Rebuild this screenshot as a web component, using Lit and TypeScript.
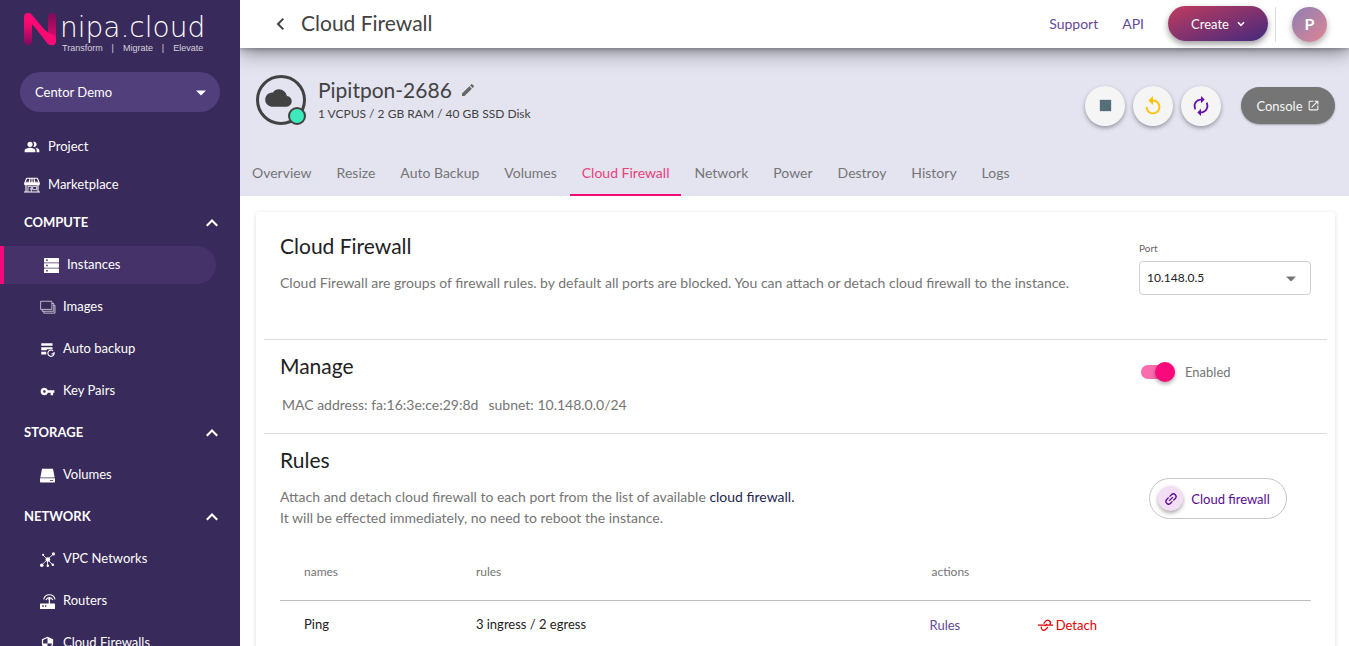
import { LitElement, html, svg, css, nothing, type SVGTemplateResult } from "lit";
import { customElement, property, state } from "lit/decorators.js";
import { classMap } from "lit/directives/class-map.js";

const icons: Record<string, SVGTemplateResult> = {
  project: svg`<path fill="currentColor" d="M16.67 13.13C18.04 14.06 19 15.32 19 17v3h4v-3c0-2.18-3.57-3.47-6.33-3.87zM15 12c2.21 0 4-1.79 4-4s-1.79-4-4-4c-.47 0-.91.1-1.33.24a5.98 5.98 0 0 1 0 7.52c.42.14.86.24 1.33.24zM9 12c2.21 0 4-1.79 4-4s-1.79-4-4-4-4 1.79-4 4 1.79 4 4 4zm0 1c-2.67 0-8 1.34-8 4v3h16v-3c0-2.66-5.33-4-8-4z"/>`,
  market: svg`<path fill="none" stroke="currentColor" stroke-width="1.6" d="M4 2h16M4 2 1 9v2h22V9l-3-7M3 11v11M21 11v11M0 22.5h24M9 2 7.5 11M15 2l1.500 9M12 2v9M1 8h22"/><path fill="none" stroke="currentColor" stroke-width="1.300" d="M6 22v-8h5v8M13 14h6v5h-6zM9.500 17v2"/><path fill="currentColor" d="M1 9h22v3.500H1z"/>`,
  instances: svg`<path fill="currentColor" fill-rule="evenodd" d="M1 0h22a1 1 0 0 1 1 1v5.500a.8.8 0 0 1-1 .8H1a.8.8 0 0 1-1-.8V1a1 1 0 0 1 1-1zm2.500 2.500v2.200H6V2.500zM1 8.500h22a1 1 0 0 1 1 1v5a1 1 0 0 1-1 1H1a1 1 0 0 1-1-1v-5a1 1 0 0 1 1-1zm2.500 2.400v2.200H6v-2.200zM1 16.700h22a1 1 0 0 1 1 1V23a1 1 0 0 1-1 1H1a1 1 0 0 1-1-1v-5.300a1 1 0 0 1 1-1zm2.500 2.600v2.200H6v-2.200z"/>`,
  images: svg`<path fill="none" stroke="currentColor" stroke-width="1.400" opacity=".75" d="M1 2h18v13H1zM3.500 15v3H22V5.500h-3M6 18v3h18V8.500h-2"/>`,
  backup: svg`<path fill="currentColor" d="M2 2h18v4H2zM2 8.500h18v3H11.500L10 13H2zM2 15.500h8v4.500H2z"/><path fill="none" stroke="currentColor" stroke-width="1.800" d="M21 14.200a5 5 0 1 0 1.500 4.800h-4M22.500 19v-3"/>`,
  key: svg`<path fill="currentColor" d="M12.650 10A5.990 5.990 0 0 0 7 6c-3.310 0-6 2.690-6 6s2.690 6 6 6a5.990 5.990 0 0 0 5.650-4H17v4h4v-4h2v-4H12.650zM7 14c-1.100 0-2-.9-2-2s.9-2 2-2 2 .9 2 2-.9 2-2 2z"/>`,
  volumes: svg`<path fill="currentColor" fill-rule="evenodd" d="M5 1h14a2 2 0 0 1 2 1.500L23.500 15H.5L3 2.500A2 2 0 0 1 5 1zM0 16.500h24V22a1 1 0 0 1-1 1H1a1 1 0 0 1-1-1zm16 2.500v1.500h5V19z"/>`,
  vpc: svg`<path stroke="currentColor" stroke-width="1.300" d="m12 12 10-9.500M12 12 2.500 21M12 12l8.500 8.500M12 12 5 5M12 12v10"/><g fill="currentColor"><circle cx="12.500" cy="12" r="3.700"/><circle cx="21.500" cy="3" r="2.500"/><circle cx="2.800" cy="21" r="2.800"/><circle cx="12.500" cy="22" r="2"/><circle cx="20.500" cy="20.500" r="2"/><circle cx="5" cy="4.500" r="1.700"/></g>`,
  routers: svg`<path fill="currentColor" fill-rule="evenodd" d="M1 15h22a1 1 0 0 1 1 1v7a1 1 0 0 1-1 1H1a1 1 0 0 1-1-1v-7a1 1 0 0 1 1-1zm2.500 3v2.500H6V18zm4.500 0v2.500h2V18zM14 7h2v8h-2z"/><path fill="none" stroke="currentColor" stroke-width="1.800" d="M6 8.500a9.200 9.200 0 0 1 18 0M9.500 9.500a6 6 0 0 1 11 0"/><circle cx="15" cy="8" r="1.800" fill="currentColor"/>`,
  firewall: svg`<path fill="currentColor" d="M12 1 3 5v6c0 5.550 3.840 10.740 9 12 5.160-1.260 9-6.450 9-12V5l-9-4zm0 10.990h7c-.53 4.120-3.280 7.790-7 8.940V12H5V6.300l7-3.110v8.800z"/>`,
  up: svg`<path fill="currentColor" d="M12 6 3 15l2.300 2.300L12 10.600l6.700 6.700L21 15z"/>`,
  down: svg`<path fill="none" stroke="currentColor" stroke-width="4.500" d="m3 7 9 9 9-9"/>`,
  back: svg`<path fill="none" stroke="currentColor" stroke-width="3" d="m17 4-8 8 8 8"/>`,
  caret: svg`<path fill="currentColor" d="m0 6 12 12L24 6z"/>`,
  pencil: svg`<path fill="currentColor" d="M3 17.250V21h3.750L17.810 9.940l-3.750-3.750L3 17.250zM20.710 7.040a1 1 0 0 0 0-1.410l-2.340-2.340a1 1 0 0 0-1.410 0l-1.830 1.830 3.750 3.750 1.830-1.830z"/>`,
  cloud: svg`<path fill="currentColor" d="M19.350 10.040A7.490 7.490 0 0 0 12 4a6.500 6.500 0 0 0-5.500 3A5.500 5.500 0 0 0 5 20h14a5 5 0 0 0 .35-9.960z"/>`,
  stop: svg`<path fill="currentColor" d="M4 4h16v16H4z"/>`,
  replay: svg`<path fill="currentColor" d="M12 5V1L7 6l5 5V7c3.310 0 6 2.690 6 6s-2.690 6-6 6-6-2.690-6-6H4c0 4.420 3.580 8 8 8s8-3.580 8-8-3.580-8-8-8z"/>`,
  loop: svg`<path fill="currentColor" d="M12 6v3l4-4-4-4v3c-4.420 0-8 3.580-8 8 0 1.570.46 3.030 1.240 4.260L6.700 14.800A5.870 5.870 0 0 1 6 12c0-3.310 2.690-6 6-6zm6.760 1.740L17.300 9.200c.44.840.7 1.790.7 2.800 0 3.310-2.690 6-6 6v-3l-4 4 4 4v-3c4.420 0 8-3.580 8-8 0-1.570-.46-3.030-1.240-4.260z"/>`,
  open: svg`<path fill="currentColor" d="M19 19H5V5h7V3H5a2 2 0 0 0-2 2v14a2 2 0 0 0 2 2h14c1.100 0 2-.9 2-2v-7h-2v7zM14 3v2h3.590l-9.830 9.830 1.410 1.410L19 6.410V10h2V3h-7z"/>`,
  link: svg`<g transform="rotate(-45 12 12)"><path fill="currentColor" d="M3.900 12c0-1.710 1.390-3.100 3.100-3.100h4V7H7a5 5 0 0 0 0 10h4v-1.900H7c-1.710 0-3.100-1.390-3.100-3.100zM8 13h8v-2H8v2zm9-6h-4v1.900h4a3.100 3.100 0 0 1 0 6.200h-4V17h4a5 5 0 0 0 0-10z"/></g>`,
  unlink: svg`<path fill="none" stroke="currentColor" stroke-width="2" d="M0 11.500h24M9 9l3-3.500a4.200 4.200 0 0 1 7 5M16 14.500l-4 4a4.200 4.200 0 0 1-6.500-5M11 13l3.500-3.500"/>`,
};

@customElement("ui-icon")
export class UiIcon extends LitElement {
  @property() name = "";
  static styles = css`
    :host { display: inline-flex; flex: none; width: 16px; height: 16px; }
    .glyph { display: block; width: 100%; height: 100%; overflow: visible; }
  `;
  render() {
    return html`<svg class="glyph" viewBox="0 0 24 24" aria-hidden="true">${icons[this.name] ?? nothing}</svg>`;
  }
}

const groups = [
  { title: "COMPUTE", items: [["instances", "Instances"], ["images", "Images"], ["backup", "Auto backup"], ["key", "Key Pairs"]] },
  { title: "STORAGE", items: [["volumes", "Volumes"]] },
  { title: "NETWORK", items: [["vpc", "VPC Networks"], ["routers", "Routers"], ["firewall", "Cloud Firewalls"]] },
];

@customElement("side-nav")
export class SideNav extends LitElement {
  static styles = css`
    :host { display: block; box-sizing: border-box; height: 100vh; overflow: hidden; background: #382a5a; color: #fff; font-size: 13px; line-height: 20px; }
    .brand { display: flex; align-items: flex-start; gap: 4px; padding: 12px 24px 0; height: 60px; box-sizing: border-box; color: #fff; text-decoration: none; }
    .mark { flex: none; width: 32px; height: 34px; }
    .words { display: flex; flex-direction: column; }
    .name { font: 200 28px/31px "DejaVu Sans", sans-serif; }
    .motto { font: 9px/10px "Liberation Sans", sans-serif; color: #d6d2df; display: flex; justify-content: space-between; padding: 0 2px; }
    .project { position: relative; display: block; margin: 12px 20px 16px; }
    .project select { appearance: none; width: 100%; height: 40px; padding: 0 15px; border: 0; border-radius: 20px; background: #503f7b; color: #fff; font: inherit; }
    .project ui-icon { position: absolute; right: 14px; top: 16px; width: 10px; height: 10px; pointer-events: none; }
    .row { display: flex; align-items: center; box-sizing: border-box; height: 38px; padding: 0 16px 0 24px; gap: 8px; color: #fff; text-decoration: none; }
    .label { padding-bottom: 3px; }
    .group { display: flex; flex-direction: column; gap: 4px; margin-bottom: 4px; }
    .head { width: 100%; border: 0; background: none; font: inherit; font-weight: 700; justify-content: space-between; padding-right: 20px; }
    .sub { padding-left: 40px; margin-right: 24px; }
    .sub ui-icon { width: 15px; height: 15px; }
    .active { border-left: 4px solid #f50a79; border-radius: 0 19px 19px 0; background: #443269; }
  `;
  render() {
    return html`
      <a class="brand" href="#">
        <svg class="mark" viewBox="0 0 32 34" aria-hidden="true">
          <defs>
            <linearGradient id="l" x2="0" y2="1"><stop stop-color="#ff0a76" /><stop offset=".4" stop-color="#f0086f" /><stop offset="1" stop-color="#7d0c5c" /></linearGradient>
            <linearGradient id="r" x2="0" y2="1"><stop stop-color="#7d0c58" /><stop offset="1" stop-color="#f50a72" /></linearGradient>
          </defs>
          <rect y="1" width="8" height="32" rx="4" fill="url(#l)" />
          <rect x="24" y="1" width="8" height="32" rx="4" fill="url(#r)" />
          <path d="M4 1c2 0 3.500 1 5 3l10 12c3 3.500 6 5 9 6l4 3v4c0 5-6 5.500-9 2L13 18C10 14 7 11 4 9 0 7 0 1 4 1z" fill="#fa0a72" />
        </svg>
        <span class="words">
          <span class="name">nipa.cloud</span>
          <span class="motto"><span>Transform</span><span>|</span><span>Migrate</span><span>|</span><span>Elevate</span></span>
        </span>
      </a>
      <label class="project">
        <select aria-label="Project"><option>Centor Demo</option></select>
        <ui-icon name="caret"></ui-icon>
      </label>
      <nav>
        <a class="row" href="#"><ui-icon name="project"></ui-icon><span class="label">Project</span></a>
        <a class="row" href="#"><ui-icon name="market"></ui-icon><span class="label">Marketplace</span></a>
        ${groups.map((g) => html`
          <div class="group">
            <button class="row head"><span class="label">${g.title}</span><ui-icon name="up"></ui-icon></button>
            ${g.items.map(([icon, label]) => html`
              <a class=${classMap({ row: true, sub: true, active: label === "Instances" })} href="#">
                <ui-icon name=${icon}></ui-icon><span class="label">${label}</span>
              </a>`)}
          </div>`)}
      </nav>
    `;
  }
}

const tabs = ["Overview", "Resize", "Auto Backup", "Volumes", "Cloud Firewall", "Network", "Power", "Destroy", "History", "Logs"];

@customElement("app-root")
export class AppRoot extends LitElement {
  @state() private enabled = true;
  static styles = css`
    :host { display: grid; grid-template-columns: 240px minmax(0, 1fr); height: 100vh; overflow: hidden; font-family: Lato, sans-serif; font-size: 14px; line-height: 20px; color: #212121; background: #fff; }
    button { font: inherit; cursor: pointer; }
    a { text-decoration: none; }
    .page { height: 100vh; overflow: hidden; }
    .top { position: relative; z-index: 1; display: flex; align-items: center; box-sizing: border-box; height: 48px; padding: 0 22px 0 32px; background: #fff; box-shadow: 0 3px 20px rgba(0,0,0,.5), 0 1px 5px rgba(0,0,0,.25); }
    .back { display: flex; padding: 0; border: 0; background: none; color: #424242; }
    .title { flex: 1; margin: 0 0 0 13px; padding-bottom: 2px; font-size: 21px; line-height: 28px; font-weight: 400; color: #424242; }
    .toplink { margin-right: 24px; color: #634a9c; }
    .create { display: flex; align-items: center; justify-content: center; gap: 8px; width: 100px; height: 35px; padding: 0; border: 0; border-radius: 18px; color: #fff; font-size: 13px; background: linear-gradient(160deg, #c03c5f, #44297d); box-shadow: 0 3px 6px rgba(0,0,0,.4); margin-bottom: 1px; }
    .create ui-icon { width: 8px; height: 8px; }
    .rule { width: 1px; height: 35px; margin: 0 16px 0 7px; background: #dcdcdc; }
    .user { width: 35px; height: 35px; padding: 0; border: 0; border-radius: 50%; color: #fff; font-size: 16px; font-weight: 700; background: linear-gradient(135deg, #8c80b4, #df8493); box-shadow: 0 3px 6px rgba(0,0,0,.3); }
    .hero { background: #e4e4f1; color: #424242; }
    .info { display: flex; align-items: center; height: 102px; padding: 2px 14px 0 16px; box-sizing: border-box; }
    .machine { position: relative; display: flex; align-items: center; justify-content: center; box-sizing: border-box; width: 50px; height: 50px; border: 3px solid #424242; border-radius: 50%; }
    .machine ui-icon { width: 28px; height: 26px; margin: 0 4px 4px 0; }
    .status { position: absolute; right: -3px; bottom: -3px; box-sizing: border-box; width: 18px; height: 18px; border: 2px solid #424242; border-radius: 50%; background: #3deabb; }
    .who { flex: 1; margin-left: 12px; }
    .vm { display: flex; align-items: center; gap: 8px; margin: 0; font-size: 21px; line-height: 28px; font-weight: 400; }
    .edit { display: flex; padding: 0; border: 0; background: none; color: #666; }
    .spec { margin: 0; font-size: 12px; line-height: 20px; }
    .ops { display: flex; align-items: center; gap: 8px; margin-top: 11px; }
    .op { display: flex; align-items: center; justify-content: center; width: 40px; height: 40px; padding: 0; border: 0; border-radius: 50%; background: #f5f5f5; box-shadow: 0 2px 4px rgba(0,0,0,.35); }
    .op ui-icon { width: 22px; height: 22px; }
    .op.stop ui-icon { width: 17px; height: 17px; }
    .stop { color: #546e7a; }
    .restart { color: #ffc107; }
    .reboot { color: #6a0dad; }
    .console { display: flex; align-items: center; justify-content: center; gap: 4px; width: 94px; height: 37px; margin-left: 12px; padding: 0; border: 0; border-radius: 19px; background: #757575; color: #f5f5f5; font-size: 13px; box-shadow: 0 1px 2px rgba(0,0,0,.3); }
    .console ui-icon { width: 13px; height: 13px; }
    .tabs { display: flex; gap: 1px; }
    .tab { box-sizing: border-box; height: 46px; padding: 13px 12px 0; border-bottom: 2px solid transparent; color: #757575; }
    .tab.on { color: #ec407a; border-color: #f50a79; }
    .card { margin: 16px 14px 0 16px; padding: 0 8px; min-height: 100vh; border-radius: 4px; background: #fff; box-shadow: 0 1px 4px rgba(0,0,0,.14); }
    .part { display: flex; justify-content: space-between; gap: 24px; padding: 0 16px; border-bottom: 1px solid #dcdcdc; }
    .intro { height: 127px; }
    .manage { height: 93px; }
    .rules { border: 0; height: 111px; }
    .part h2 { margin: 0; padding-top: 20px; font-size: 21px; line-height: 28px; font-weight: 400; }
    .manage h2, .rules h2 { padding-top: 12px; }
    .part p { margin: 12px 0 0; line-height: 21px; color: #757575; }
    .facts { display: flex; gap: 10px; padding-left: 2px; }
    .part .facts { margin-top: 14px; }
    .side { flex: none; width: 172px; }
    .port { display: block; padding-top: 29px; font-size: 10px; line-height: 14px; color: #666; }
    .pick { position: relative; margin-top: 6px; }
    .pick select { appearance: none; display: block; width: 100%; height: 34px; padding: 0 7px; border: 1px solid #d0d0d0; border-radius: 4px; background: #fff; color: #212121; font: 12px/20px Lato, sans-serif; }
    .pick ui-icon { position: absolute; right: 15px; top: 13px; width: 10px; height: 10px; color: #757575; pointer-events: none; }
    .switch { display: flex; align-items: center; gap: 10px; padding: 22px 0 0 2px; font-size: 13px; color: #757575; }
    .switch input { appearance: none; position: relative; width: 34px; height: 14px; margin: 0; border-radius: 7px; background: #bdbdbd; }
    .switch input::before { content: ""; position: absolute; left: 0; top: -3px; width: 20px; height: 20px; border-radius: 50%; background: #fafafa; box-shadow: 0 2px 4px rgba(0,0,0,.35); }
    .switch input:checked { background: #fb6cae; }
    .switch input:checked::before { left: 14px; background: #f90979; }
    .inline { color: #261f4f; }
    .attach { display: flex; align-items: center; justify-content: center; gap: 8px; width: 138px; height: 41px; margin: 44px 0 0 10px; padding: 0 8px 0 0; border: 1px solid #c4c4c4; border-radius: 21px; background: #fff; color: #570b91; font-size: 13px; }
    .chip { display: flex; align-items: center; justify-content: center; width: 25px; height: 25px; border-radius: 50%; background: #f3dff5; box-shadow: 0 2px 4px rgba(0,0,0,.35); }
    .table { width: calc(100% - 32px); margin: 0 16px; border-collapse: collapse; table-layout: fixed; font-size: 13px; }
    .table th { height: 53px; padding: 0 0 2px; border-bottom: 1px solid #bdbdbd; text-align: left; font-size: 12px; font-weight: 400; color: #757575; }
    .table td { height: 46px; padding: 0 0 2px; }
    .table .first { padding-left: 24px; }
    .table .acts { padding-left: 2px; }
    .c1 { width: 19%; } .c2 { width: 44%; } .c3 { width: 10.5%; }
    .act { color: #634a9c; }
    .act, .detach { padding-top: 2px; }
    .act { display: block; }
    .detach { display: flex; align-items: center; gap: 3px; padding: 2px 0 0; border: 0; background: none; color: #e60000; }
    .detach ui-icon { width: 15px; height: 15px; }
  `;
  render() {
    return html`
      <side-nav></side-nav>
      <main class="page">
        <header class="top">
          <button class="back" aria-label="Back"><ui-icon name="back"></ui-icon></button>
          <h1 class="title">Cloud Firewall</h1>
          <a class="toplink" href="#">Support</a>
          <a class="toplink" href="#">API</a>
          <button class="create">Create <ui-icon name="down"></ui-icon></button>
          <span class="rule"></span>
          <button class="user">P</button>
        </header>
        <section class="hero">
          <div class="info">
            <div class="machine"><ui-icon name="cloud"></ui-icon><span class="status"></span></div>
            <div class="who">
              <h2 class="vm">Pipitpon-2686 <button class="edit" aria-label="Rename"><ui-icon name="pencil"></ui-icon></button></h2>
              <p class="spec">1 VCPUS / 2 GB RAM / 40 GB SSD Disk</p>
            </div>
            <div class="ops">
              <button class="op stop" aria-label="Stop"><ui-icon name="stop"></ui-icon></button>
              <button class="op restart" aria-label="Restart"><ui-icon name="replay"></ui-icon></button>
              <button class="op reboot" aria-label="Reboot"><ui-icon name="loop"></ui-icon></button>
              <button class="console">Console <ui-icon name="open"></ui-icon></button>
            </div>
          </div>
          <nav class="tabs">
            ${tabs.map((t) => html`<a class=${classMap({ tab: true, on: t === "Cloud Firewall" })} href="#">${t}</a>`)}
          </nav>
        </section>
        <section class="card">
          <div class="part intro">
            <div>
              <h2>Cloud Firewall</h2>
              <p>Cloud Firewall are groups of firewall rules. by default all ports are blocked. You can attach or detach cloud firewall to the instance.</p>
            </div>
            <div class="side">
              <label class="port" for="port">Port</label>
              <div class="pick">
                <select id="port"><option>10.148.0.5</option></select>
                <ui-icon name="caret"></ui-icon>
              </div>
            </div>
          </div>
          <div class="part manage">
            <div>
              <h2>Manage</h2>
              <p class="facts"><span>MAC address: fa:16:3e:ce:29:8d</span><span>subnet: 10.148.0.0/24</span></p>
            </div>
            <div class="side">
              <label class="switch">
                <input type="checkbox" role="switch" .checked=${this.enabled} @change=${() => (this.enabled = !this.enabled)} />
                Enabled
              </label>
            </div>
          </div>
          <div class="part rules">
            <div>
              <h2>Rules</h2>
              <p>Attach and detach cloud firewall to each port from the list of available <a class="inline" href="#">cloud firewall.</a><br />It will be effected immediately, no need to reboot the instance.</p>
            </div>
            <div class="side">
              <button class="attach"><span class="chip"><ui-icon name="link"></ui-icon></span>Cloud firewall</button>
            </div>
          </div>
          <table class="table">
            <colgroup><col class="c1" /><col class="c2" /><col class="c3" /><col /></colgroup>
            <thead><tr><th class="first">names</th><th>rules</th><th class="acts" colspan="2">actions</th></tr></thead>
            <tbody>
              <tr>
                <td class="first">Ping</td>
                <td>3 ingress / 2 egress</td>
                <td><a class="act" href="#">Rules</a></td>
                <td><button class="detach"><ui-icon name="unlink"></ui-icon>Detach</button></td>
              </tr>
            </tbody>
          </table>
        </section>
      </main>
    `;
  }
}
